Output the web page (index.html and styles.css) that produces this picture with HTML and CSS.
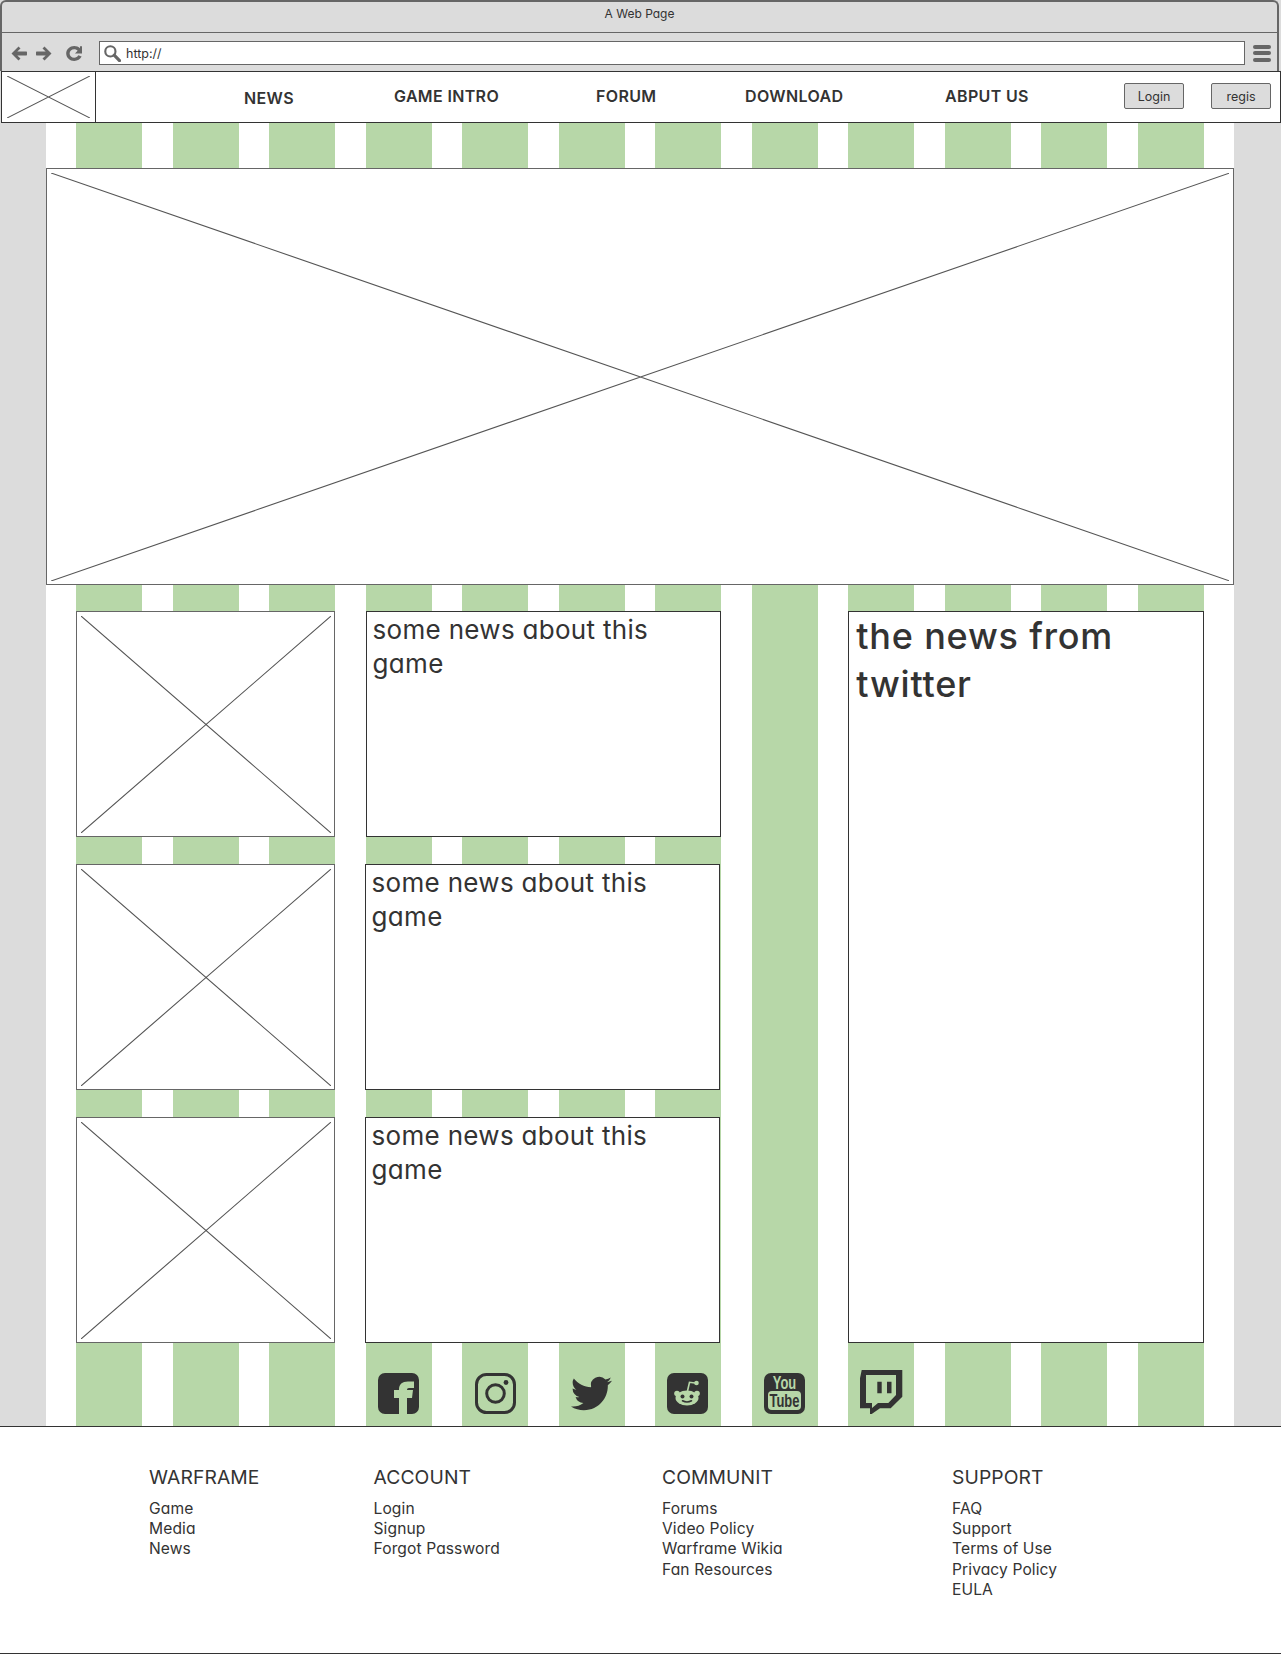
FILE: index.html
```html
<!DOCTYPE html>
<html lang="en">
<head>
<meta charset="utf-8">
<title>A Web Page</title>
<link rel="stylesheet" href="styles.css">
</head>
<body>
<header class="browser">
  <div class="browser-title">A Web Page</div>
  <div class="toolbar">
    <svg class="tool-icon" viewBox="0 0 16 15"><path d="M7.5 0.5 L0.5 7.5 L7.5 14.5 L9.5 12.5 L6.3 9.5 H15 C15.8 9.5 16 9 16 8.5 V6.5 C16 6 15.8 5.5 15 5.5 H6.3 L9.5 2.5 Z"/></svg>
    <svg class="tool-icon" viewBox="0 0 16 15"><path d="M8.5 0.5 L15.5 7.5 L8.5 14.5 L6.5 12.5 L9.7 9.5 H1 C0.2 9.5 0 9 0 8.5 V6.5 C0 6 0.2 5.5 1 5.5 H9.7 L6.5 2.5 Z"/></svg>
    <svg class="tool-icon reload" viewBox="0 0 16 15"><path d="M14 2.2 V0.3 L16 0.3 V7.5 H9 L11.6 4.7 C10.8 3.9 9.6 3.3 8.2 3.3 C5.7 3.3 3.6 5.1 3.6 7.5 C3.6 9.9 5.7 11.7 8.2 11.7 C10 11.7 11.6 10.8 12.3 9.3 L15.6 10.6 C14.4 13.2 11.5 15 8.2 15 C3.9 15 0.2 11.7 0.2 7.5 C0.2 3.3 3.9 0 8.2 0 C10.5 0 12.5 0.9 14 2.2 Z"/></svg>
    <div class="address">
      <svg class="search-icon" viewBox="0 0 16 16"><circle cx="6" cy="6" r="4.8"/><path d="M9.6 9.6 L14.6 14.6"/></svg>
      <span>http://</span>
    </div>
    <div class="hamburger"><i></i><i></i><i></i></div>
  </div>
</header>

<nav class="nav">
  <div class="nav-logo">
    <svg class="cross" viewBox="0 0 100 100" preserveAspectRatio="none"><path d="M0 0 L100 100 M100 0 L0 100"/></svg>
  </div>
  <span></span>
  <a class="nav-link nav-link-low">NEWS</a>
  <a class="nav-link">GAME INTRO</a>
  <a class="nav-link">FORUM</a>
  <a class="nav-link">DOWNLOAD</a>
  <a class="nav-link">ABPUT US</a>
  <button class="btn">Login</button>
  <button class="btn">regis</button>
</nav>

<main class="main">
  <i class="stripe s1"></i><i class="stripe s2"></i><i class="stripe s3"></i><i class="stripe s4"></i>
  <i class="stripe s5"></i><i class="stripe s6"></i><i class="stripe s7"></i><i class="stripe s8"></i>
  <i class="stripe s9"></i><i class="stripe s10"></i><i class="stripe s11"></i><i class="stripe s12"></i>

  <div class="ph hero">
    <svg class="cross" viewBox="0 0 100 100" preserveAspectRatio="none"><path d="M0 0 L100 100 M100 0 L0 100"/></svg>
  </div>

  <div class="ph thumb r1">
    <svg class="cross" viewBox="0 0 100 100" preserveAspectRatio="none"><path d="M0 0 L100 100 M100 0 L0 100"/></svg>
  </div>
  <article class="news r1">some news about this game</article>

  <div class="ph thumb r2">
    <svg class="cross" viewBox="0 0 100 100" preserveAspectRatio="none"><path d="M0 0 L100 100 M100 0 L0 100"/></svg>
  </div>
  <article class="news r2 shifted">some news about this game</article>

  <div class="ph thumb r3">
    <svg class="cross" viewBox="0 0 100 100" preserveAspectRatio="none"><path d="M0 0 L100 100 M100 0 L0 100"/></svg>
  </div>
  <article class="news r3 shifted">some news about this game</article>

  <aside class="twitter">the news from twitter</aside>

  <div class="social c4">
    <svg class="icon" viewBox="0 0 41 41"><path fill-rule="evenodd" d="M7 0 H34 A7 7 0 0 1 41 7 V34 A7 7 0 0 1 34 41 H29 V25 H34 L35 17 H29 C29 15.8 29.6 15 31 15 H36 V8.5 H30 C24 8.5 21 11.5 21 16 V17 H16 V25 H21 V41 H7 A7 7 0 0 1 0 34 V7 A7 7 0 0 1 7 0 Z"/></svg>
  </div>
  <div class="social c5">
    <svg class="icon" viewBox="0 0 41 41"><rect class="ig" x="1.5" y="1.5" width="38" height="38" rx="10"/><circle class="ig" cx="20.5" cy="20.5" r="8.8"/><circle cx="31" cy="9.5" r="2.4"/></svg>
  </div>
  <div class="social c6">
    <svg class="icon" viewBox="0 0 24 24"><path d="M23.953 4.57a10 10 0 01-2.825.775 4.958 4.958 0 002.163-2.723c-.951.555-2.005.959-3.127 1.184a4.92 4.92 0 00-8.384 4.482C7.69 8.095 4.067 6.13 1.64 3.162a4.822 4.822 0 00-.666 2.475c0 1.71.87 3.213 2.188 4.096a4.904 4.904 0 01-2.228-.616v.06a4.923 4.923 0 003.946 4.827 4.996 4.996 0 01-2.212.085 4.936 4.936 0 004.604 3.417 9.867 9.867 0 01-6.102 2.105c-.39 0-.779-.023-1.17-.067a13.995 13.995 0 007.557 2.209c9.053 0 13.998-7.496 13.998-13.985 0-.21 0-.42-.015-.63A9.935 9.935 0 0024 4.59z"/></svg>
  </div>
  <div class="social c7">
    <svg class="icon" viewBox="0 0 41 41">
      <rect width="41" height="41" rx="7"/>
      <g class="light">
        <circle cx="10" cy="20.5" r="2.8"/><circle cx="30" cy="20.5" r="2.8"/>
        <ellipse cx="20" cy="25" rx="11.5" ry="7.4"/>
        <circle cx="29.5" cy="10" r="2.3"/>
      </g>
      <path class="antenna" d="M20.5 18 L22.5 9.3 L28 10"/>
      <circle cx="15.5" cy="23.5" r="2"/><circle cx="24.5" cy="23.5" r="2"/>
      <path class="smile" d="M15.5 27.8 Q20 30.2 24.5 27.8"/>
    </svg>
  </div>
  <div class="social c8">
    <svg class="icon" viewBox="0 0 41 41">
      <rect width="41" height="41" rx="7"/>
      <rect class="light" x="4" y="18" width="33" height="19" rx="4"/>
      <g transform="translate(20.5 15.5) scale(0.72 1)"><text class="yt yt-you">You</text></g>
      <g transform="translate(20.5 34) scale(0.72 1)"><text class="yt yt-tube">Tube</text></g>
    </svg>
  </div>
  <div class="social c9">
    <svg class="icon twitch" viewBox="0 0 43 44"><path fill-rule="evenodd" d="M1.7 0 H42.3 V26.7 L30.7 38.3 H20 L11.7 44 H10 V38.3 H0 V8.3 Z M6 5 V33 H12 V38 L18 33 H28.3 L36 25 V5 Z M17.3 11.7 H21.7 V23.3 H17.3 Z M27 11.7 H31.5 V23.3 H27 Z"/></svg>
  </div>
</main>

<footer class="footer">
  <section>
    <h3>WARFRAME</h3>
    <ul><li>Game</li><li>Media</li><li>News</li></ul>
  </section>
  <section>
    <h3>ACCOUNT</h3>
    <ul><li>Login</li><li>Signup</li><li>Forgot Password</li></ul>
  </section>
  <section>
    <h3>COMMUNIT</h3>
    <ul><li>Forums</li><li>Video Policy</li><li>Warframe Wikia</li><li>Fan Resources</li></ul>
  </section>
  <section>
    <h3>SUPPORT</h3>
    <ul><li>FAQ</li><li>Support</li><li>Terms of Use</li><li>Privacy Policy</li><li>EULA</li></ul>
  </section>
</footer>
</body>
</html>
```
FILE: styles.css
```css
* { box-sizing: border-box; }

html, body { margin: 0; padding: 0; }

body {
  width: 1281px;
  background: #dcdcdc;
  color: #333;
  font-family: Inter, "Liberation Sans", sans-serif;
  font-feature-settings: "cv11" 1;
}

/* browser chrome */
.browser {
  height: 71px;
  margin-right: 2px;
  border: 2px solid #666;
  border-bottom: 0;
  border-radius: 6px 6px 0 0;
}

.browser-title {
  height: 32px;
  margin-top: -1px;
  border-bottom: 1px solid #666;
  padding-top: 5px;
  text-align: center;
  font-size: 12px;
  line-height: 16px;
}

.toolbar {
  display: flex;
  align-items: center;
  height: 38px;
  padding: 2px 0 0 9px;
}

.tool-icon {
  width: 16px;
  height: 15px;
  margin-right: 9px;
  fill: #666;
}
.tool-icon.reload { margin: 0 17px 0 5px; }

.address {
  display: flex;
  align-items: center;
  gap: 5px;
  flex: 0 0 1146px;
  height: 24px;
  margin-right: 8px;
  padding-left: 4px;
  background: #fff;
  border: 1px solid #666;
  font-size: 12.5px;
}

.search-icon {
  width: 17px;
  height: 17px;
  fill: none;
  stroke: #666;
  stroke-width: 2;
}
.search-icon path { stroke-width: 3; stroke-linecap: round; }

.hamburger {
  display: flex;
  flex-direction: column;
  gap: 2.5px;
  width: 18px;
}
.hamburger i {
  height: 4px;
  background: #666;
  border-radius: 2px;
}

/* site nav */
.nav {
  display: grid;
  grid-template-columns: 94px 148px 150px 202px 149px 200px 179px 87px 60px;
  align-items: center;
  height: 52px;
  margin-left: 1px;
  background: #fff;
  border: 1px solid #333;
}

.nav-logo {
  height: 50px;
  padding: 4px 5px;
  border-right: 1px solid #333;
}

.nav-link {
  font-size: 16px;
  font-weight: 600;
  line-height: 18px;
  letter-spacing: 0.35px;
  color: #333;
  margin-top: -2px;
}
.nav-link-low { margin-top: 2px; }

.btn {
  width: 60px;
  height: 26px;
  margin-top: -2px;
  padding: 0;
  background: #dcdcdc;
  border: 1px solid #666;
  border-radius: 2px;
  color: #333;
  font: inherit;
  font-size: 12.5px;
  font-feature-settings: "cv11" 1;
}

/* placeholders */
.cross {
  display: block;
  width: 100%;
  height: 100%;
  fill: none;
  stroke: #555;
  stroke-width: 1.1;
}
.cross path { vector-effect: non-scaling-stroke; }

.ph {
  padding: 3.5px;
  background: #fff;
  border: 1px solid #666;
}

/* main grid */
.main {
  display: grid;
  grid-template-columns: repeat(12, 66px);
  grid-template-rows: 45px 417px 26px 226px 27px 226px 27px 226px 83px;
  justify-content: space-between;
  width: 1188px;
  margin-left: 46px;
  padding: 0 30px;
  background: #fff;
}

.stripe {
  grid-row: 1 / -1;
  background: #b7d7a8;
}
.s1 { grid-column: 1; } .s2 { grid-column: 2; } .s3 { grid-column: 3; }
.s4 { grid-column: 4; } .s5 { grid-column: 5; } .s6 { grid-column: 6; }
.s7 { grid-column: 7; } .s8 { grid-column: 8; } .s9 { grid-column: 9; }
.s10 { grid-column: 10; } .s11 { grid-column: 11; } .s12 { grid-column: 12; }

.hero {
  grid-row: 2;
  grid-column: 1 / -1;
  margin: 0 -30px;
}

.r1 { grid-row: 4; }
.r2 { grid-row: 6; }
.r3 { grid-row: 8; }

.thumb { grid-column: 1 / 4; }

.news {
  grid-column: 4 / 8;
  padding: 1px 14px 0 6px;
  background: #fff;
  border: 1px solid #333;
  font-size: 26px;
  font-weight: 400;
  line-height: 34px;
  letter-spacing: 0.3px;
}
.news.shifted { margin: 0 1px 0 -1px; }

.twitter {
  grid-row: 4 / 9;
  grid-column: 9 / -1;
  padding: 0 7px;
  background: #fff;
  border: 1px solid #333;
  font-size: 36px;
  font-weight: 500;
  line-height: 48px;
  letter-spacing: 0.8px;
}

.social {
  grid-row: 9;
  display: flex;
  justify-content: center;
  align-items: flex-end;
  padding-bottom: 12px;
}
.c4 { grid-column: 4; } .c5 { grid-column: 5; } .c6 { grid-column: 6; }
.c7 { grid-column: 7; padding-right: 2px; } .c8 { grid-column: 8; } .c9 { grid-column: 9; }

.icon {
  flex: none;
  width: 41px;
  height: 41px;
  fill: #333;
}
.icon.twitch { width: 43px; height: 44px; }

.ig { fill: none; stroke: #333; stroke-width: 3; }
.light { fill: #b7d7a8; }
.antenna { fill: none; stroke: #b7d7a8; stroke-width: 1.6; }
.smile { fill: none; stroke: #333; stroke-width: 1.6; stroke-linecap: round; }

.yt {
  font-family: "Liberation Sans Narrow", "Liberation Sans", sans-serif;
  font-weight: 700;
  font-size: 18px;
  text-anchor: middle;
}
.yt-you { fill: #b7d7a8; }
.yt-tube { fill: #333; }

/* footer */
.footer {
  display: grid;
  grid-template-columns: 224.5px 288.5px 290px 1fr;
  height: 228px;
  padding: 38px 0 0 149px;
  background: #fff;
  border-top: 1px solid #333;
  border-bottom: 1px solid #333;
}

.footer h3 {
  margin: 0 0 9.5px;
  font-size: 19.3px;
  font-weight: 400;
  line-height: 24px;
  letter-spacing: 0.1px;
}

.footer ul {
  margin: 0;
  padding: 0;
  list-style: none;
  font-size: 15.6px;
  line-height: 20.4px;
  letter-spacing: 0.1px;
}
```
